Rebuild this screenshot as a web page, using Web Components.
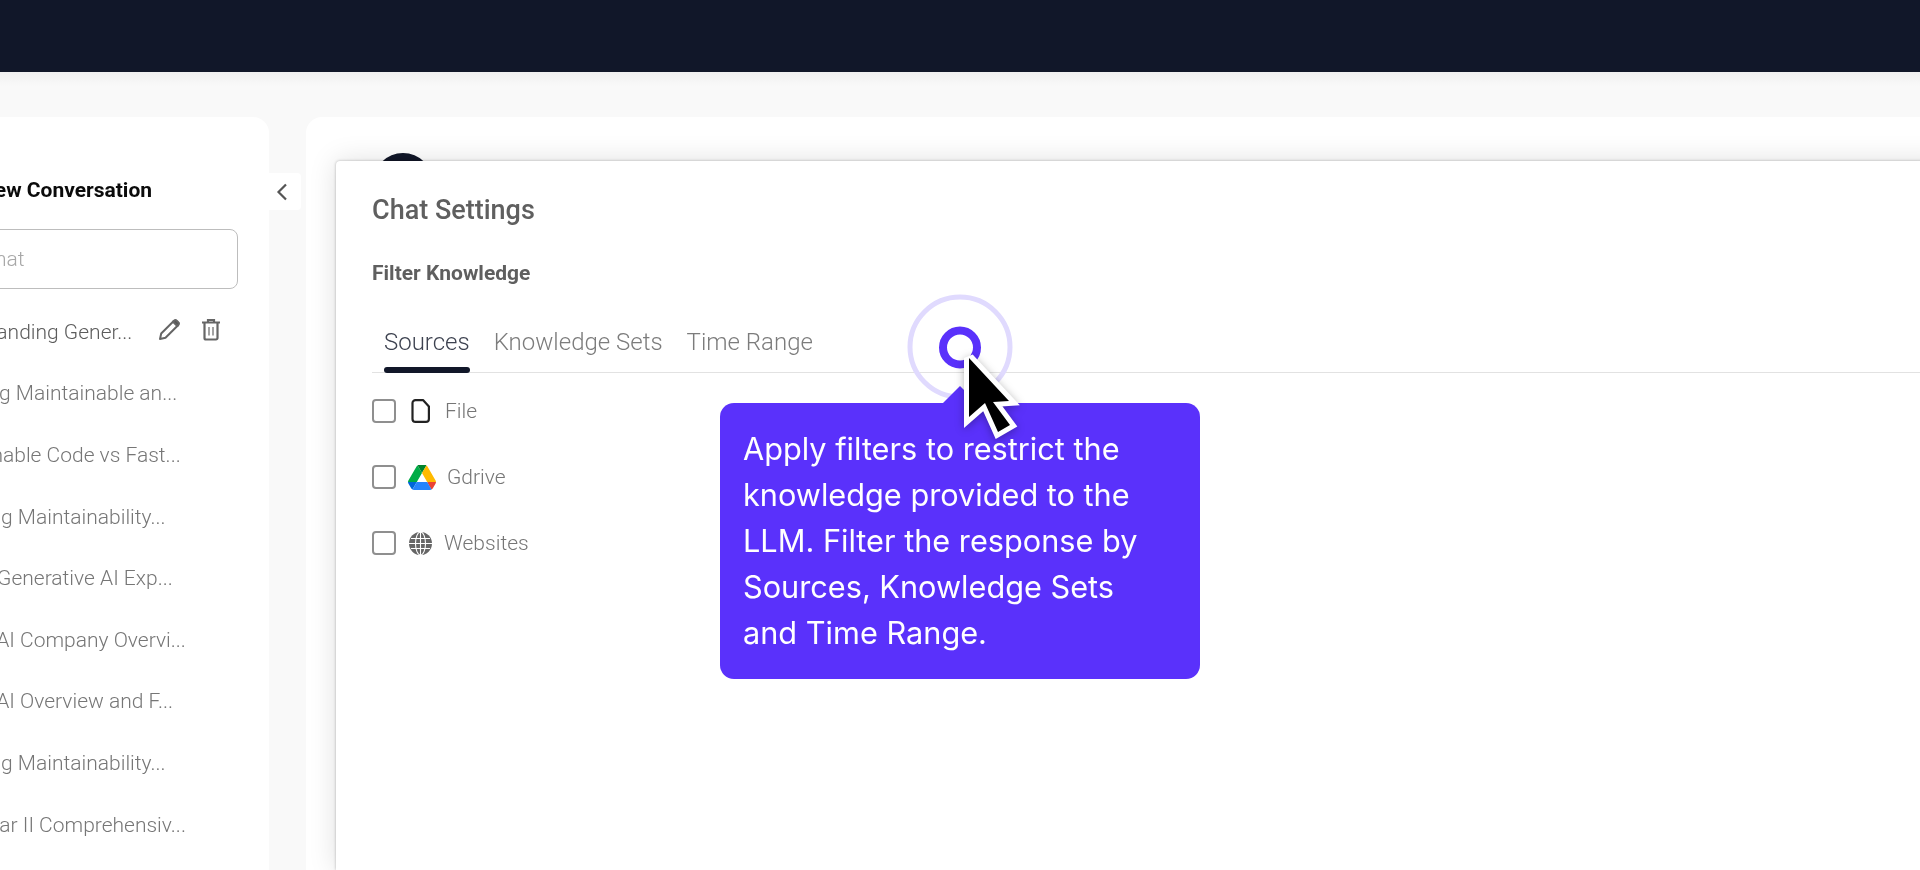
<!DOCTYPE html>
<html>
<head>
<meta charset="utf-8">
<title>Chat Settings</title>
<style>
    html, body { margin: 0; height: 100%; overflow: hidden; background: #f9f9f9; }
    body { font-family: Roboto, "Liberation Sans", sans-serif; }
</style>
</head>
<body>
<app-shell>
    <chat-sidebar slot="side">
        <chat-row active style="margin-left:-76px">Understanding Gener...</chat-row>
        <chat-row style="margin-left:-70px">Ensuring Maintainable an...</chat-row>
        <chat-row style="margin-left:-77px">Maintainable Code vs Fast...</chat-row>
        <chat-row style="margin-left:-68px">Ensuring Maintainability...</chat-row>
        <chat-row style="margin-left:-43px">The Generative AI Exp...</chat-row>
        <chat-row style="margin-left:-64px">Writer AI Company Overvi...</chat-row>
        <chat-row style="margin-left:-64px">Writer AI Overview and F...</chat-row>
        <chat-row style="margin-left:-68px">Ensuring Maintainability...</chat-row>
        <chat-row style="margin-left:-78px">World War II Comprehensiv...</chat-row>
    </chat-sidebar>
    <chat-settings slot="main"></chat-settings>
</app-shell>
<script>
(function() {
    class AppShell extends HTMLElement {
        constructor() {
            super();
            this.attachShadow({ mode: 'open' }).innerHTML = `
<style>
    :host { display: flex; flex-direction: column; height: 870px; overflow: hidden; filter: blur(.35px); }
    #top { height: 72px; flex: none; background: #111729; }
    #body {
        flex: 1;
        min-height: 0;
        display: flex;
        padding-top: 45px;
        background: linear-gradient(#f0f0f0, #f9f9f9 14px);
    }
    #side { flex: none; width: 269px; display: block; }
    #toggle {
        flex: none;
        width: 32px;
        height: 37px;
        margin-top: 56px;
        padding-left: 6px;
        box-sizing: border-box;
        background: #fff;
        display: flex;
        align-items: center;
        border-radius: 0 4px 4px 0;
    }
    #main {
        flex: none;
        width: 1614px;
        margin-left: 5px;
        background: #fff;
        border-radius: 16px 0 0 0;
        padding: 44px 0 0 30px;
        position: relative;
        overflow: hidden;
    }
    #avatar {
        position: absolute;
        left: 67px;
        top: 36px;
        width: 60px;
        height: 60px;
        border-radius: 50%;
        background: #111729;
    }
</style>
<div id="top"></div>
<div id="body">
    <div id="side"><slot name="side"></slot></div>
    <div id="toggle">
        <svg width="14" height="20" viewBox="0 0 14 20" fill="none" stroke="#555" stroke-width="2.2"><path d="M11 2.500 3.500 10l7.500 7.500"/></svg>
    </div>
    <div id="main"><div id="avatar"></div><slot name="main"></slot></div>
</div>`;
        }
    }

    class ChatSidebar extends HTMLElement {
        constructor() {
            super();
            this.attachShadow({ mode: 'open' }).innerHTML = `
<style>
    :host {
        display: block;
        height: 100%;
        background: #fff;
        border-radius: 0 16px 0 0;
        overflow: hidden;
    }
    #inner { padding-top: 59px; }
    #title { font: 700 21px/28px Roboto, sans-serif; color: #0b0b0b; height: 28px; white-space: nowrap; margin-left: -20px; }
    #search {
        box-sizing: border-box;
        width: 318px;
        height: 60px;
        margin: 25px 0 0 -80px;
        border: 1.5px solid #bdbdbd;
        border-radius: 8px;
        font: 300 21px/59px Roboto, sans-serif;
        color: #a8a8a8;
        white-space: nowrap;
        padding-left: 16.5px;
    }
    #list { margin-top: 12px; display: flex; flex-direction: column; }
</style>
<div id="inner">
    <div id="title">New Conversation</div>
    <div id="search">New chat</div>
    <div id="list"><slot></slot></div>
</div>`;
        }
    }

    class ChatRow extends HTMLElement {
        constructor() {
            super();
            this.attachShadow({ mode: 'open' }).innerHTML = `
<style>
    :host {
        display: flex;
        align-items: center;
        height: 61.6px;
        white-space: nowrap;
        font: 300 21px Roboto, sans-serif;
        color: #767676;
    }
    :host([active]) { color: #5c5c5c; }
    #icons { display: none; margin: 0 0 3px 26px; gap: 22px; align-items: center; }
    :host([active]) #icons { display: flex; }
</style>
<slot></slot>
<span id="icons">
    <svg width="22" height="22" viewBox="0 0 22 22" fill="none" stroke="#666" stroke-width="2" stroke-linejoin="round"><path d="M2 20l1.200-5.500L15.500 2.200l4.300 4.300L7.500 18.800z"/><path d="M15 2.700 19.300 7l1.200-1.300a1.500 1.500 0 0 0 0-2.200l-2-2a1.500 1.500 0 0 0-2.200 0z" fill="#555"/></svg>
    <svg width="18" height="22" viewBox="0 0 18 22" fill="none" stroke="#666" stroke-width="2.200"><path d="M0 3.500h18M6 3.500V1h6v2.500M2.500 3.500V19a1.500 1.500 0 0 0 1.500 1.500h10a1.500 1.500 0 0 0 1.500-1.500V3.500"/><path d="M7 8v8.500M11 8v8.500" stroke="#999" stroke-width="1.800"/></svg>
</span>`;
        }
    }

    class SourceRow extends HTMLElement {
        constructor() {
            super();
            this.attachShadow({ mode: 'open' }).innerHTML = `
<style>
    :host {
        display: flex;
        align-items: center;
        height: 66px;
        font: 300 21px Roboto, sans-serif;
        color: #767676;
    }
    #box {
        flex: none;
        box-sizing: border-box;
        width: 24px;
        height: 24px;
        border: 2px solid #8f8f8f;
        border-radius: 4px;
    }
</style>
<span id="box"></span><slot name="icon"></slot><slot></slot>`;
        }
    }

    class SettingsTabs extends HTMLElement {
        constructor() {
            super();
            this.attachShadow({ mode: 'open' }).innerHTML = `
<style>
    :host {
        display: flex;
        gap: 24px;
        height: 60px;
        box-sizing: border-box;
        padding-left: 12px;
        border-bottom: 1.5px solid #e2e2e2;
        font: 300 24px/58px Roboto, sans-serif;
        color: #7c7c7c;
    }
    span { display: block; position: relative; white-space: nowrap; }
    .on { color: #3d4250; }
    .on::after {
        content: '';
        position: absolute;
        left: 0;
        right: 0;
        bottom: -1px;
        height: 6px;
        border-radius: 3px;
        background: #111729;
    }
</style>
<span class="on">Sources</span><span>Knowledge Sets</span><span>Time Range</span>`;
        }
    }

    class TourBeacon extends HTMLElement {
        constructor() {
            super();
            this.attachShadow({ mode: 'open' }).innerHTML = `
<style>
    :host { position: absolute; left: 905px; top: 292px; width: 110px; height: 110px; display: block; }
</style>
<svg width="110" height="110" viewBox="0 0 110 110" fill="none">
    <circle cx="55" cy="55" r="50" stroke="#e0dafe" stroke-width="5"/>
    <circle cx="55" cy="55.500" r="17" stroke="#5a31fb" stroke-width="8"/>
</svg>`;
        }
    }

    class TourTip extends HTMLElement {
        constructor() {
            super();
            this.attachShadow({ mode: 'open' }).innerHTML = `
<style>
    :host {
        position: absolute;
        left: 720px;
        top: 403px;
        width: 480px;
        height: 276px;
        box-sizing: border-box;
        padding: 23px 40px 0 23px;
        background: #5a31fb;
        border-radius: 14px;
        color: #fff;
        font: 400 30.7px/46px Inter, sans-serif;
    }
    #arrow {
        position: absolute;
        left: 228px;
        top: -12px;
        width: 24px;
        height: 24px;
        background: #5a31fb;
        transform: rotate(45deg);
    }
    #text { position: relative; }
</style>
<div id="arrow"></div>
<div id="text"><slot></slot></div>`;
        }
    }

    class TourCursor extends HTMLElement {
        constructor() {
            super();
            this.attachShadow({ mode: 'open' }).innerHTML = `
<style>
    :host { position: absolute; left: 955px; top: 340px; display: block; filter: drop-shadow(0 2px 4px rgba(0,0,0,.3)); }
</style>
<svg width="80" height="110" viewBox="0 0 80 110">
    <path d="M14 18V77L30 63 43 92 55 85 38 62 54 61z" fill="#000" stroke="#fff" stroke-width="10" stroke-linejoin="miter" stroke-miterlimit="2.6" paint-order="stroke"/>
</svg>`;
        }
    }

    class ChatSettings extends HTMLElement {
        constructor() {
            super();
            this.attachShadow({ mode: 'open' }).innerHTML = `
<style>
    :host {
        display: block;
        position: relative;
        height: 100%;
        box-sizing: border-box;
        background: #fff;
        border-radius: 4px 0 0 0;
        padding: 35px 0 0 36px;
        box-shadow: 0 0 28px rgba(0,0,0,.13), 0 0 3px rgba(0,0,0,.28);
        font-family: Roboto, sans-serif;
    }
    #heading { font: 500 27px/28px Roboto, sans-serif; color: #5f5f5f; }
    #filter { font: 700 21px/24px Roboto, sans-serif; color: #5f5f5f; margin-top: 37px; }
    settings-tabs { margin-top: 28px; }
    #sources { margin-top: 5px; }
</style>
<div id="heading">Chat Settings</div>
<div id="filter">Filter Knowledge</div>
<settings-tabs></settings-tabs>
<div id="sources">
    <source-row>
        <svg slot="icon" style="margin:0 15px" width="19" height="24" viewBox="0 0 19 24" fill="none" stroke="#222" stroke-width="2.200" stroke-linejoin="round"><path d="M4.500 1.100h7.500l5.900 6.400v12.400a3 3 0 0 1-3 3h-10.400a3 3 0 0 1-3-3v-15.800a3 3 0 0 1 3-3z"/></svg>
        File
    </source-row>
    <source-row>
        <svg slot="icon" style="margin:0 11px 0 12px" width="28" height="25" viewBox="0 0 87.300 78">
            <path d="m6.600 66.850 3.850 6.650c.8 1.400 1.950 2.500 3.300 3.300l13.750-23.800h-27.500c0 1.550.4 3.100 1.200 4.500z" fill="#0066da"/>
            <path d="m43.650 25-13.750-23.800c-1.350.8-2.500 1.900-3.300 3.300l-25.400 44a9.060 9.060 0 0 0 -1.200 4.500h27.500z" fill="#00ac47"/>
            <path d="m73.550 76.800c1.350-.8 2.500-1.900 3.300-3.300l1.600-2.750 7.650-13.250c.8-1.400 1.200-2.950 1.200-4.500h-27.502l5.852 11.500z" fill="#ea4335"/>
            <path d="m43.650 25 13.750-23.800c-1.350-.8-2.900-1.200-4.500-1.200h-18.500c-1.600 0-3.150.45-4.500 1.200z" fill="#00832d"/>
            <path d="m59.800 53h-32.300l-13.750 23.800c1.350.8 2.900 1.200 4.500 1.200h50.800c1.600 0 3.150-.45 4.500-1.200z" fill="#2684fc"/>
            <path d="m73.400 26.500-12.700-22c-.8-1.400-1.950-2.500-3.300-3.300l-13.750 23.800 16.150 28h27.450c0-1.550-.4-3.100-1.200-4.500z" fill="#ffba00"/>
        </svg>
        Gdrive
    </source-row>
    <source-row>
        <svg slot="icon" style="margin:0 12px 0 13px" width="23" height="23" viewBox="0 0 23 23" fill="none">
            <circle cx="11.500" cy="11.500" r="11.500" fill="#666"/>
            <g stroke="#fff" stroke-width="1.100"><ellipse cx="11.500" cy="11.500" rx="5" ry="11.500"/><path d="M0 11.500h23M2 6.500h19M2 16.500h19M11.500 0v23"/></g>
        </svg>
        Websites
    </source-row>
</div>`;
        }
    }

    class TourLayer extends HTMLElement {
        constructor() {
            super();
            this.attachShadow({ mode: 'open' }).innerHTML = `
<style>
    :host { position: absolute; left: 0; top: 0; width: 1920px; height: 870px; display: block; filter: blur(.35px); }
</style>
<tour-beacon></tour-beacon>
<tour-tip>Apply filters to restrict the knowledge provided to the LLM. Filter the response by Sources, Knowledge Sets and Time Range.</tour-tip>
<tour-cursor></tour-cursor>`;
        }
    }

    customElements.define('app-shell', AppShell);
    customElements.define('chat-sidebar', ChatSidebar);
    customElements.define('chat-row', ChatRow);
    customElements.define('source-row', SourceRow);
    customElements.define('settings-tabs', SettingsTabs);
    customElements.define('tour-beacon', TourBeacon);
    customElements.define('tour-tip', TourTip);
    customElements.define('tour-cursor', TourCursor);
    customElements.define('chat-settings', ChatSettings);
    customElements.define('tour-layer', TourLayer);

    document.body.appendChild(document.createElement('tour-layer'));
})();
</script>
</body>
</html>
